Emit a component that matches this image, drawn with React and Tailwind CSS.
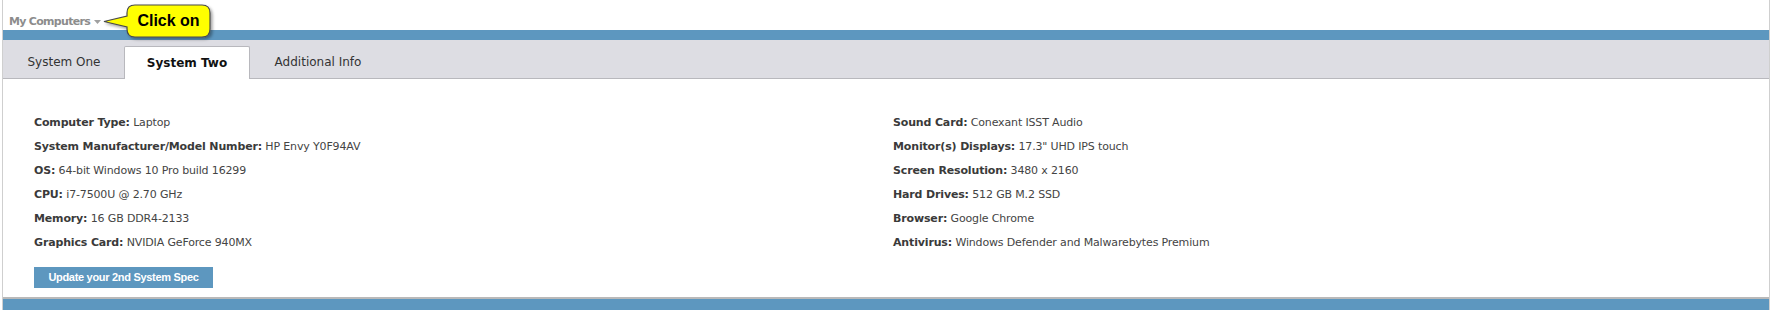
import React from "react";

const left = [
  ["Computer Type:", "Laptop"],
  ["System Manufacturer/Model Number:", "HP Envy Y0F94AV"],
  ["OS:", "64-bit Windows 10 Pro build 16299"],
  ["CPU:", "i7-7500U @ 2.70 GHz"],
  ["Memory:", "16 GB DDR4-2133"],
  ["Graphics Card:", "NVIDIA GeForce 940MX"],
];
const right = [
  ["Sound Card:", "Conexant ISST Audio"],
  ["Monitor(s) Displays:", "17.3\" UHD IPS touch"],
  ["Screen Resolution:", "3480 x 2160"],
  ["Hard Drives:", "512 GB M.2 SSD"],
  ["Browser:", "Google Chrome"],
  ["Antivirus:", "Windows Defender and Malwarebytes Premium"],
];

function Row({ k, v }) {
  return (
    <div className="h-[24px] leading-[24px] whitespace-nowrap">
      <span className="font-bold text-[#3a3a3a]">{k}</span>{" "}
      <span className="text-[#444]">{v}</span>
    </div>
  );
}

export default function App() {
  return (
    <div className="relative w-[1772px] h-[310px] bg-white overflow-hidden font-['DejaVu_Sans',sans-serif]">
      <div className="ml-[2px] w-[1768px] h-[310px] border-l border-r border-[#cfcfcf] flex flex-col">
        <div className="h-[30px] flex items-end pb-[3px] pl-[6px]">
          <span className="text-[11px] font-bold text-[#8c8c8c] leading-none tracking-[-0.7px]">My Computers</span>
          <svg width="9" height="6" viewBox="0 0 9 6" className="ml-[3px] mb-[2px]">
            <path d="M1 1 L8 1 L4.5 5 Z" fill="#a0a0a0" />
          </svg>
        </div>
        <div className="h-[10px] bg-[#5d97bf]" />
        <div className="h-[39px] bg-[#dddde3] border-b border-[#b8b8bd] flex items-end pl-[1px] text-[12px]">
          <div className="h-[32px] w-[120px] flex items-center justify-center text-[#333]">System One</div>
          <div className="h-[33px] w-[126px] -mb-px flex items-center justify-center bg-white border border-b-0 border-[#b8b8bd] rounded-t-[2px] font-bold text-[#111]">
            System Two
          </div>
          <div className="h-[32px] w-[136px] flex items-center justify-center text-[#333]">Additional Info</div>
        </div>
        <div className="flex-1 bg-white pl-[31px] pt-[32px] text-[11px] tracking-[-0.15px]">
          <div className="grid grid-cols-[859px_1fr]">
            <div>
              {left.map(([k, v]) => (
                <Row key={k} k={k} v={v} />
              ))}
            </div>
            <div>
              {right.map(([k, v]) => (
                <Row key={k} k={k} v={v} />
              ))}
            </div>
          </div>
          <div className="mt-[12px] w-[179px] h-[21px] bg-[#5d97bf] flex items-center justify-center text-white font-bold text-[11px] tracking-[-0.3px] font-['Liberation_Sans',Arial,sans-serif]">
            Update your 2nd System Spec
          </div>
        </div>
        <div className="h-[2px] bg-[#b9b9b9]" />
        <div className="h-[11px] bg-[#5d97bf]" />
      </div>

      <div className="absolute left-[100px] top-0 w-[120px] h-[44px]">
        <svg width="120" height="44" viewBox="0 0 120 44" className="absolute left-0 top-0">
          <defs>
            <filter id="sh" x="-20%" y="-20%" width="140%" height="150%">
              <feDropShadow dx="2" dy="2" stdDeviation="1.5" floodColor="#000" floodOpacity="0.35" />
            </filter>
          </defs>
          <path
            d="M35 5 H102 Q110 5 110 13 V29 Q110 37 102 37 H35 Q27 37 27 29 V27 L4 21.5 L27 16 V13 Q27 5 35 5 Z"
            fill="#ffff00"
            stroke="#4a4a4a"
            strokeWidth="1.2"
            filter="url(#sh)"
          />
        </svg>
        <div className="absolute left-[27px] top-[5px] w-[83px] h-[32px] flex items-center justify-center text-[16px] font-bold text-black font-['Liberation_Sans',Arial,sans-serif]">
          Click on
        </div>
      </div>
    </div>
  );
}
